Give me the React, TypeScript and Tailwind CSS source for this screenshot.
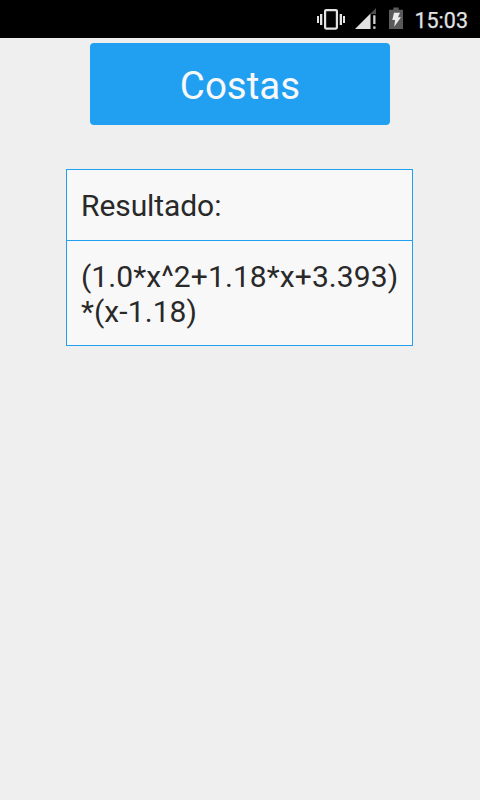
import React from 'react';

const RESULT_LINES = ['(1.0*x^2+1.18*x+3.393)', '*(x-1.18)'];

// Vibrate, signal and battery glyphs, left to right
const StatusIcons: React.FC = () => (
  <svg width="88" height="38" viewBox="0 0 88 38" aria-hidden="true">
    {/* vibrate */}
    <g fill="#e2e2e2">
      <rect x="1" y="16" width="2" height="7" />
      <rect x="4" y="14" width="2.3" height="11" />
      <rect x="23.7" y="14" width="2.3" height="11" />
      <rect x="27" y="16" width="2" height="7" />
    </g>
    <rect x="9.1" y="10.1" width="11.8" height="18.5" rx="1" fill="none" stroke="#e2e2e2" strokeWidth="2.2" />

    {/* signal */}
    <path d="M60 8V14H54.5V13.500Z" fill="#4d4d4d" />
    <path d="M54.500 13.500V29H39Z" fill="#e2e2e2" />
    <rect x="57.2" y="15.300" width="2.3" height="8.700" fill="#d0d0d0" />
    <rect x="57.2" y="26.400" width="2.3" height="2.400" fill="#d0d0d0" />

    {/* battery */}
    <path d="M77.300 7.500h5.400v2.200H87V29H73V9.700h4.300Z" fill="#5a5a5a" />
    <path d="M78 12.700h6L82 17.300h3L78.200 26.800l0.900-6.800h-2.800Z" fill="#ececec" />
  </svg>
);

const StatusBar: React.FC = () => (
  <header className="flex h-[38px] items-center justify-end bg-black pr-3">
    <StatusIcons />
    <span className="ml-[10px] pt-[3px] text-[21.5px] leading-none text-[#e2e2e2] [-webkit-text-stroke:0.25px_#e2e2e2]">
      15:03
    </span>
  </header>
);

const App: React.FC = () => {
  return (
    <div className="min-h-screen bg-[#efefef] font-['Roboto',sans-serif]">
      <StatusBar />

      <main className="flex flex-col items-center pt-[5px]">
        <button className="h-[82px] w-[300px] rounded bg-[#21a0f2] pt-1 text-[38.5px] leading-none text-[#f8f8f8]">
          Costas
        </button>

        <section className="mt-11 mr-px w-[347px] border border-[#21a0f2] bg-[#f8f8f8] text-[30px] leading-[35px] text-[#292929]">
          <h2 className="h-[71px] border-b border-[#21a0f2] px-[14px] pt-[18px] tracking-[-0.08px]">Resultado:</h2>
          <div className="h-[104px] px-[14px] pt-[18px] tracking-[0.09px] whitespace-nowrap">
            {RESULT_LINES.map((line) => (
              <p key={line}>{line}</p>
            ))}
          </div>
        </section>
      </main>
    </div>
  );
};

export default App;
